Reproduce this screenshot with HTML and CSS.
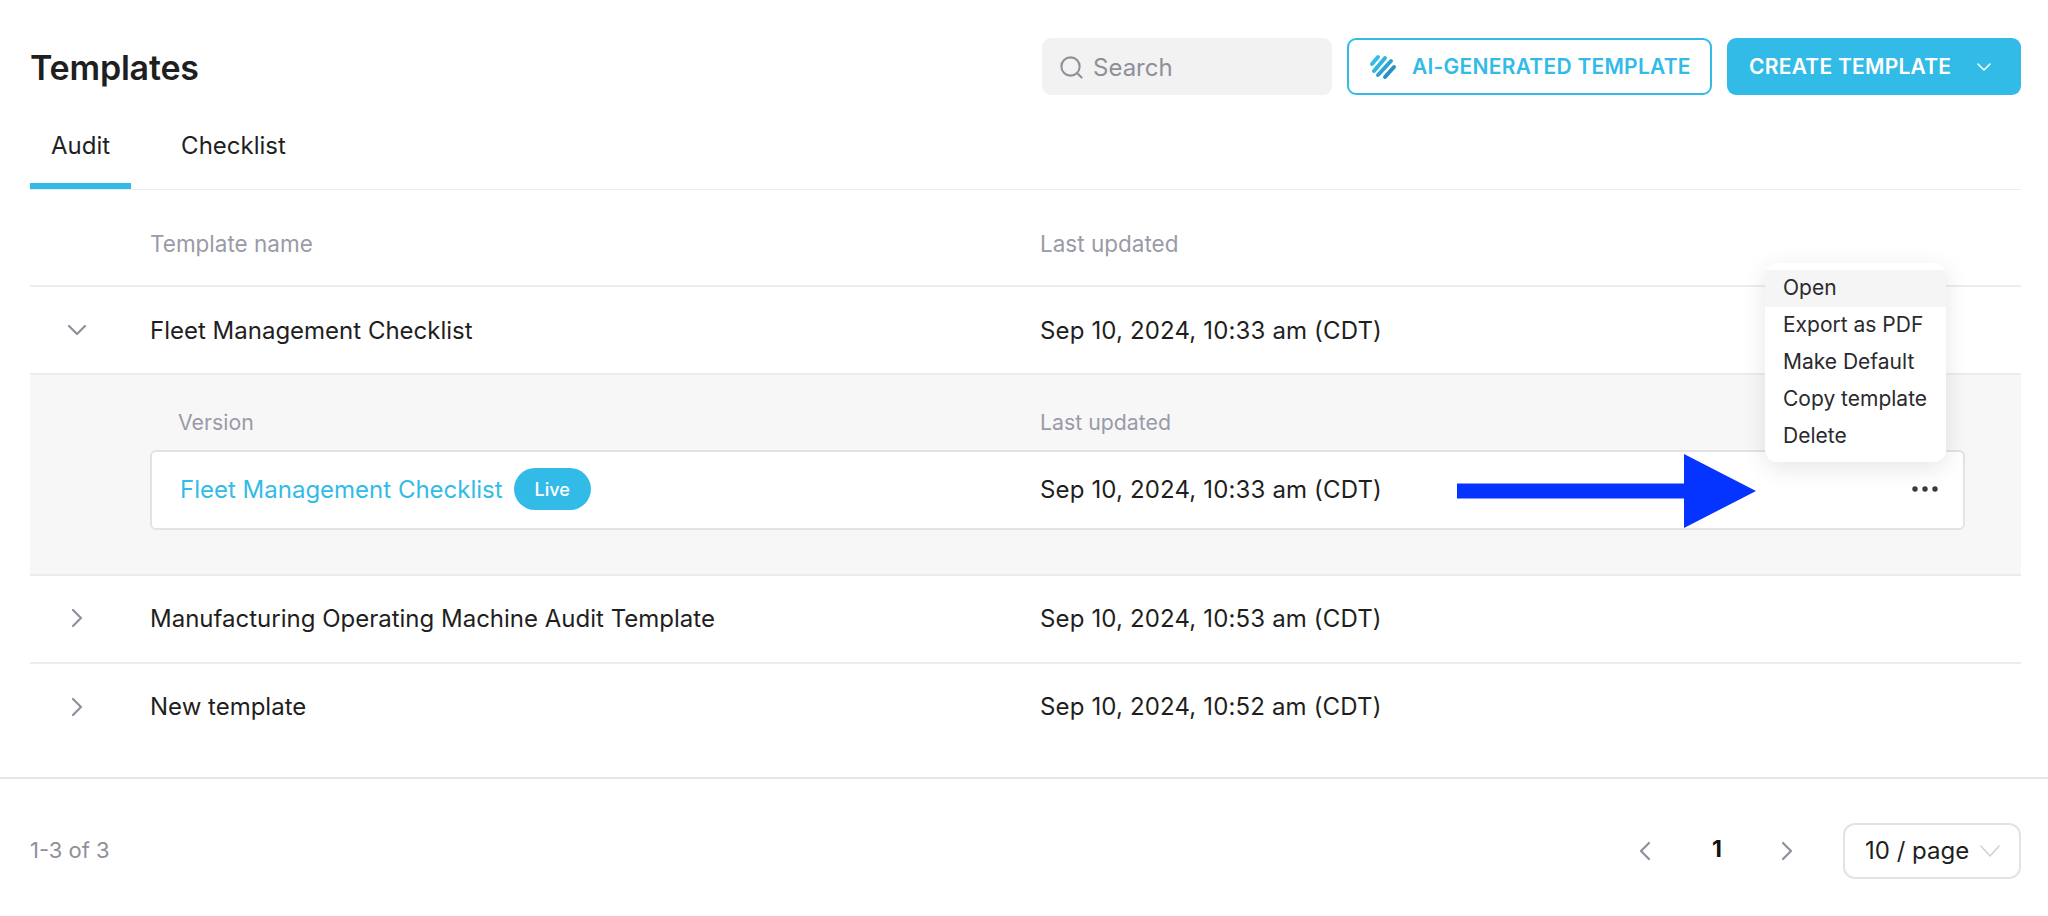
FILE: index.html
```html
<!DOCTYPE html>
<html lang="en">
<head>
<meta charset="utf-8">
<title>Templates</title>
<link rel="stylesheet" href="styles.css">
</head>
<body>
<div class="page">
  <header class="topbar">
    <h1 class="title">Templates</h1>
    <div class="actions">
      <div class="search">
        <svg class="search-icon" viewBox="0 0 26 26" fill="none" stroke="#8f8f99" stroke-width="2.2" stroke-linecap="round"><circle cx="12" cy="12" r="9.5"/><path d="M19 19l4.5 4.5"/></svg>
        <span>Search</span>
      </div>
      <button class="btn btn-outline">
        <svg class="ai-icon" viewBox="0 0 28 26" fill="none" stroke-width="4" stroke-linecap="round">
          <path stroke="#35bde9" d="M3 10L9 3"/><path stroke="#33b3e0" d="M5 17L16 4"/><path stroke="#2ea3d2" d="M9 21L22 7"/><path stroke="#2a90c2" d="M16 23L25 13"/>
        </svg>
        <span>AI-GENERATED TEMPLATE</span>
      </button>
      <button class="btn btn-solid">
        <span>CREATE TEMPLATE</span>
        <svg class="btn-caret" viewBox="0 0 14 8" fill="none" stroke="#fff" stroke-width="1.6" stroke-linecap="round" stroke-linejoin="round"><path d="M1 1l6 6 6-6"/></svg>
      </button>
    </div>
  </header>

  <nav class="tabs">
    <a class="tab tab-active">Audit</a>
    <a class="tab">Checklist</a>
  </nav>

  <section class="table">
    <div class="row row-head">
      <span></span><span>Template name</span><span>Last updated</span>
    </div>

    <div class="row">
      <svg class="chev-down" viewBox="0 0 20 12" fill="none" stroke="#8f8f9c" stroke-width="2.2" stroke-linecap="round" stroke-linejoin="round"><path d="M2 2l8 8 8-8"/></svg>
      <span>Fleet Management Checklist</span>
      <span class="date">Sep 10, 2024, 10:33 am (CDT)</span>
    </div>

    <div class="versions">
      <div class="version-head">
        <span>Version</span><span>Last updated</span>
      </div>
      <div class="version-card">
        <div class="version-name">
          <a class="link">Fleet Management Checklist</a>
          <span class="pill">Live</span>
        </div>
        <span class="date">Sep 10, 2024, 10:33 am (CDT)</span>
        <svg class="dots" viewBox="0 0 26 6" fill="#3a3a40"><circle cx="3" cy="3" r="2.7"/><circle cx="13" cy="3" r="2.7"/><circle cx="23" cy="3" r="2.7"/></svg>
      </div>
    </div>

    <div class="row row-after">
      <svg class="chev-right" viewBox="0 0 12 20" fill="none" stroke="#8f8f9c" stroke-width="2.2" stroke-linecap="round" stroke-linejoin="round"><path d="M2 2l8 8-8 8"/></svg>
      <span>Manufacturing Operating Machine Audit Template</span>
      <span class="date">Sep 10, 2024, 10:53 am (CDT)</span>
    </div>

    <div class="row row-last">
      <svg class="chev-right" viewBox="0 0 12 20" fill="none" stroke="#8f8f9c" stroke-width="2.2" stroke-linecap="round" stroke-linejoin="round"><path d="M2 2l8 8-8 8"/></svg>
      <span>New template</span>
      <span class="date">Sep 10, 2024, 10:52 am (CDT)</span>
    </div>
  </section>
</div>

<footer class="footer">
  <span class="count">1-3 of 3</span>
  <div class="pager">
    <svg class="chev-right" viewBox="0 0 12 20" fill="none" stroke="#8f8f9c" stroke-width="2.2" stroke-linecap="round" stroke-linejoin="round"><path d="M10 2l-8 8 8 8"/></svg>
    <span class="current">1</span>
    <svg class="chev-right" viewBox="0 0 12 20" fill="none" stroke="#8f8f9c" stroke-width="2.2" stroke-linecap="round" stroke-linejoin="round"><path d="M2 2l8 8-8 8"/></svg>
    <div class="select">
      <span>10 / page</span>
      <svg class="select-caret" viewBox="0 0 20 12" fill="none" stroke="#cfcfd6" stroke-width="1.5" stroke-linecap="round" stroke-linejoin="round"><path d="M1 1l9 10 9-10"/></svg>
    </div>
  </div>
</footer>

<ul class="menu">
  <li class="menu-item menu-item-active">Open</li>
  <li class="menu-item">Export as PDF</li>
  <li class="menu-item">Make Default</li>
  <li class="menu-item">Copy template</li>
  <li class="menu-item">Delete</li>
</ul>

<svg class="arrow" viewBox="0 0 300 74"><path fill="#0533ff" d="M0 29.5H227V0L299 37L227 74V44.5H0Z"/></svg>
</body>
</html>
```

FILE: styles.css
```css
* { box-sizing: border-box; }
html, body { margin: 0; padding: 0; background: #fff; }
body {
  font-family: Inter, "Liberation Sans", sans-serif;
  font-size: 24px;
  color: #1f1f22;
  position: relative;
  height: 916px;
  overflow: hidden;
}
.page { padding: 38px 27px 0 30px; }
.topbar { display: flex; justify-content: space-between; align-items: center; height: 57px; }
.title { margin: 0; padding-top: 2px; font-size: 34px; font-weight: 600; color: #1f1f22; letter-spacing: -0.2px; }
.actions { display: flex; gap: 15px; }
.search {
  width: 290px; height: 57px; background: #f2f2f2; border-radius: 9px;
  display: flex; align-items: center; gap: 9px; padding: 2px 0 0 17px;
  color: #8f8f99; font-size: 24px;
}
.search-icon { width: 25px; height: 25px; }
.btn {
  height: 57px; border-radius: 9px; font-family: inherit; font-size: 21px; font-weight: 600;
  display: flex; align-items: center; padding: 0; letter-spacing: 0.25px;
}
.btn-outline { width: 365px; background: #fff; border: 2px solid #33bbe8; color: #33bbe8; padding-left: 20px; gap: 15px; }
.ai-icon { width: 28px; height: 26px; }
.btn-solid { width: 294px; background: #33bbe8; border: 0; color: #fff; padding-left: 22px; }
.btn-caret { width: 14px; height: 8px; margin-left: 26px; }

.tabs { display: flex; height: 95px; border-bottom: 1px solid #ececee; gap: 29px; align-items: stretch; }
.tab { padding: 13px 21px 0; display: flex; align-items: center; height: 94px; border-bottom: 6px solid transparent; }
.tab-active { border-bottom-color: #33bbe8; }

.date { letter-spacing: 0.15px; }
.row {
  display: grid; grid-template-columns: 120px 890px 1fr; align-items: center;
  height: 88px; border-bottom: 2px solid #ececee;
}
.row-head { height: 97px; padding-top: 12px; color: #9a9aa8; font-size: 22.5px; }
.row-after { padding-bottom: 2px; }
.row-last { border-bottom: 0; padding-bottom: 3px; }
.chev-down { width: 20px; height: 12px; margin-left: 37px; }
.chev-right { width: 12px; height: 20px; margin-left: 41px; }
.versions { height: 201px; background: #f7f7f7; border-bottom: 2px solid #ececee; padding: 0 56px 0 120px; }
.version-head {
  display: grid; grid-template-columns: 890px 1fr; align-items: center; height: 75px;
  padding-top: 19px; color: #9a9aa8; font-size: 21.3px;
}
.version-head span:first-child { padding-left: 28px; }
.version-card {
  display: grid; grid-template-columns: 860px 1fr 26px; align-items: center;
  height: 80px; background: #fff; border: 2px solid #e3e3e7; border-radius: 6px;
  padding: 0 25px 2px 28px;
}
.version-name { display: flex; align-items: center; gap: 11px; }
.link { color: #33bbe8; }
.pill {
  width: 77px; height: 42px; border-radius: 21px; background: #33bbe8; color: #fff;
  font-size: 18px; display: flex; align-items: center; justify-content: center; font-weight: 500;
}
.dots { width: 26px; height: 6px; grid-column: 3; }

.footer {
  position: absolute; left: 0; right: 0; top: 777px; height: 139px;
  border-top: 2px solid #e6e6e8; padding: 6px 27px 0 30px;
  display: flex; justify-content: space-between; align-items: center;
}
.count { color: #8f8f99; font-size: 22px; margin-bottom: 2px; }
.pager { display: flex; align-items: center; }
.pager .chev-right { margin-left: 0; }
.current { font-weight: 700; font-size: 23px; color: #111; margin: 0 59px 4px 61px; }
.select {
  margin-left: 50px; width: 178px; height: 56px; border: 2px solid #e3e3e7; border-radius: 12px;
  display: flex; align-items: center; justify-content: space-between; padding: 0 19px 0 20px;
}
.select-caret { width: 20px; height: 12px; }

.menu {
  position: absolute; left: 1765px; top: 263px; width: 181px; height: 199px; margin: 0; padding: 7px 0;
  list-style: none; background: #fff; border-radius: 12px;
  box-shadow: 0 6px 24px rgba(0,0,0,0.10);
}
.menu-item { height: 37px; padding: 0 0 2px 18px; font-size: 21px; display: flex; align-items: center; color: #2a2a2e; }
.menu-item-active { background: #f5f5f5; }
.arrow { position: absolute; left: 1457px; top: 454px; width: 300px; height: 74px; }
```
